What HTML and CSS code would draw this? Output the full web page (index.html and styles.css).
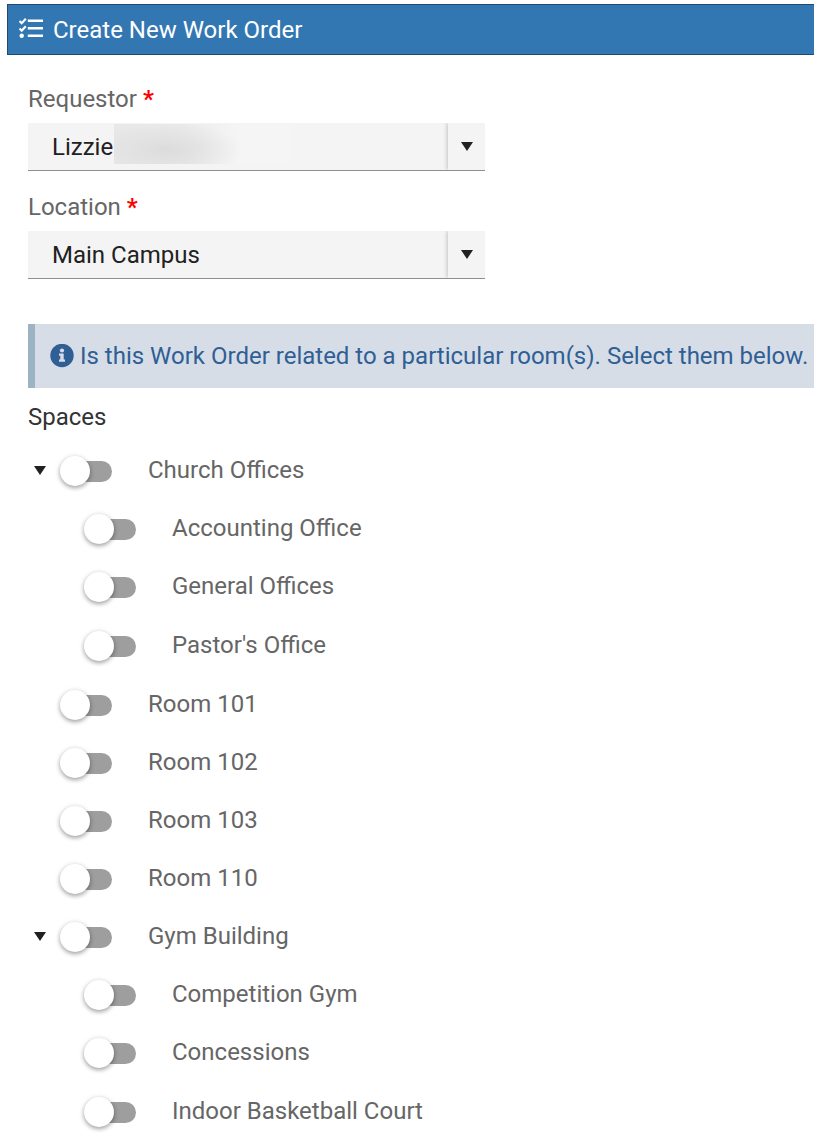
FILE: index.html
```html
<!DOCTYPE html>
<html lang="en">
<head>
<meta charset="utf-8">
<meta name="viewport" content="width=device-width, initial-scale=1">
<title>Create New Work Order</title>
<link rel="stylesheet" href="styles.css">
</head>
<body>
<header class="titlebar">
  <svg class="titlebar-icon" viewBox="0 0 26 24" aria-hidden="true">
    <g fill="none" stroke="currentColor" stroke-width="2.200">
      <path d="M0.500 3l2.200 2.200L6.800 0.800M0.500 10.500l2.200 2.200L6.800 8.300"/>
      <path d="M8.800 2.800h15.200M8.800 10.300h15.200M8.800 17.800h15.200" stroke-width="2.600"/>
    </g>
    <circle cx="2.700" cy="17.800" r="2.200" fill="currentColor"/>
  </svg>
  <h1 class="title">Create New Work Order</h1>
</header>
<main class="form">
  <div class="field">
    <label class="label" for="requestor">Requestor <b class="required">*</b></label>
    <div class="picker">
      <select class="select" id="requestor"><option>Lizzie</option></select>
      <span class="redaction"></span>
      <span class="picker-arrow"><svg class="caret" viewBox="0 0 12 9" aria-hidden="true"><path d="M0 0h12L6 9z"/></svg></span>
    </div>
  </div>
  <div class="field">
    <label class="label" for="location">Location <b class="required">*</b></label>
    <div class="picker">
      <select class="select" id="location"><option>Main Campus</option></select>
      <span class="picker-arrow"><svg class="caret" viewBox="0 0 12 9" aria-hidden="true"><path d="M0 0h12L6 9z"/></svg></span>
    </div>
  </div>
  <p class="notice">
    <svg class="notice-icon" viewBox="0 0 24 24" aria-hidden="true">
      <circle cx="12" cy="11.500" r="11.700" fill="#2f5f94"/>
      <circle cx="12" cy="6.500" r="2.100" fill="#d6dde7"/>
      <path d="M9 9.500h4.700v6H15v2.300H9v-2.300h1.300v-3.700H9z" fill="#d6dde7"/>
    </svg>
    <span>Is this Work Order related to a particular room(s). Select them below.</span>
  </p>
  <h2 class="heading">Spaces</h2>
  <ul class="tree">
    <li>
      <div class="row">
        <button class="expander" type="button" aria-label="Collapse Church Offices" aria-expanded="true"><svg class="caret" viewBox="0 0 12 9" aria-hidden="true"><path d="M0 0h12L6 9z"/></svg></button>
        <input class="switch" type="checkbox" id="s1"><label for="s1">Church Offices</label>
      </div>
      <ul class="branch">
        <li class="row"><input class="switch" type="checkbox" id="s2"><label for="s2">Accounting Office</label></li>
        <li class="row"><input class="switch" type="checkbox" id="s3"><label for="s3">General Offices</label></li>
        <li class="row"><input class="switch" type="checkbox" id="s4"><label for="s4">Pastor's Office</label></li>
      </ul>
    </li>
    <li class="row"><input class="switch" type="checkbox" id="s5"><label for="s5">Room 101</label></li>
    <li class="row"><input class="switch" type="checkbox" id="s6"><label for="s6">Room 102</label></li>
    <li class="row"><input class="switch" type="checkbox" id="s7"><label for="s7">Room 103</label></li>
    <li class="row"><input class="switch" type="checkbox" id="s8"><label for="s8">Room 110</label></li>
    <li>
      <div class="row">
        <button class="expander" type="button" aria-label="Collapse Gym Building" aria-expanded="true"><svg class="caret" viewBox="0 0 12 9" aria-hidden="true"><path d="M0 0h12L6 9z"/></svg></button>
        <input class="switch" type="checkbox" id="s9"><label for="s9">Gym Building</label>
      </div>
      <ul class="branch">
        <li class="row"><input class="switch" type="checkbox" id="s10"><label for="s10">Competition Gym</label></li>
        <li class="row"><input class="switch" type="checkbox" id="s11"><label for="s11">Concessions</label></li>
        <li class="row"><input class="switch" type="checkbox" id="s12"><label for="s12">Indoor Basketball Court</label></li>
      </ul>
    </li>
  </ul>
</main>
</body>
</html>
```
FILE: styles.css
```css
* {
  box-sizing: border-box;
}

body {
  margin: 0;
  padding-top: 4px;
  background: #fff;
  color: #666;
  font: 24px/32px Roboto, "Liberation Sans", sans-serif;
}

.titlebar {
  display: flex;
  align-items: center;
  gap: 8px;
  margin-left: 7px;
  padding: 9px 11px 8px;
  border: 1px solid #204a6e;
  border-right: 0;
  background: #3277b2;
  color: #fff;
}

.titlebar-icon {
  flex: none;
  width: 26px;
  height: 24px;
}

.title,
.heading {
  margin: 0;
  font-size: 24px;
  font-weight: 400;
}

.form {
  padding: 28px 0 0 28px;
}

.field {
  max-width: 457px;
  margin-bottom: 20px;
}

.label {
  display: block;
  margin-bottom: 8px;
}

.required {
  color: #f00;
}

.picker {
  position: relative;
}

.select {
  display: block;
  width: 100%;
  height: 48px;
  padding: 0 48px 0 24px;
  border: 0;
  border-bottom: 1px solid #8f8f8f;
  border-radius: 0;
  background: #f4f4f4;
  color: #212121;
  font: inherit;
  appearance: none;
}

.redaction {
  position: absolute;
  top: 1px;
  left: 86px;
  width: 178px;
  height: 40px;
  background:
    radial-gradient(ellipse 76px 28px at 52px 26px, #dcdcdc, rgba(222, 222, 222, 0)),
    linear-gradient(90deg, #e8e8e8, #ebebeb 40%, #f5f5f5 70%);
  pointer-events: none;
}

.picker-arrow {
  position: absolute;
  top: 0;
  right: 0;
  bottom: 1px;
  display: grid;
  place-items: center;
  width: 37px;
  box-shadow: -1px 0 4px rgba(0, 0, 0, 0.2);
  clip-path: inset(0 0 0 -8px);
  pointer-events: none;
}

.caret {
  display: block;
  width: 12px;
  height: 9px;
  fill: #212121;
}

.notice {
  display: flex;
  align-items: center;
  gap: 6px;
  margin: 45px 0 13px;
  padding: 16px 0 16px 15px;
  border-left: 7px solid #9bb3c3;
  background: #d6dde7;
  color: #2f5f94;
}

.notice-icon {
  flex: none;
  width: 24px;
  height: 24px;
}

.heading {
  color: #333;
}

.tree,
.branch {
  margin: 0;
  padding: 0;
  list-style: none;
}

.tree {
  padding: 8px 0 0 32px;
}

.branch {
  padding: 0 0 1px 24px;
}

.row {
  position: relative;
  display: flex;
  align-items: center;
  gap: 36px;
  height: 58px;
}

.row + .row {
  margin-top: 0;
}

.expander {
  position: absolute;
  left: -26px;
  padding: 0;
  border: 0;
  background: none;
}

.switch {
  display: grid;
  flex: none;
  align-items: center;
  width: 52px;
  height: 30px;
  margin: 2px 0 0;
  appearance: none;
}

.tree > .row:last-of-type,
.branch .row:last-child {
  margin-top: 1px;
}

.switch::before,
.switch::after {
  grid-area: 1 / 1;
  content: "";
}

.switch::before {
  height: 21px;
  margin-left: 4px;
  border-radius: 11px;
  background: #9e9e9e;
}

.switch::after {
  width: 30px;
  height: 30px;
  border-radius: 50%;
  background: #fff;
  box-shadow: 0 2px 4px rgba(0, 0, 0, 0.3), 0 1px 6px rgba(0, 0, 0, 0.12);
}

.switch:checked::after {
  justify-self: end;
}
```
